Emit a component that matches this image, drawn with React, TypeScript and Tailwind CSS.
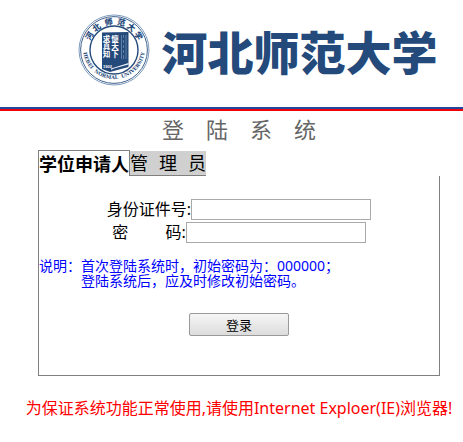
import React from "react";

function Seal() {
  return (
    <svg viewBox="0 0 72 72" className="w-18 h-18 shrink-0" fill="none" aria-hidden="true">
      <defs>
        <path id="sealTop" d="M10.5 36 A25.5 25.5 0 0 1 61.5 36" />
        <path id="sealBottom" d="M5 34 A31 31 0 1 0 67 34" />
      </defs>
      <circle cx="36" cy="36" r="35" stroke="#7f9bbd" strokeWidth="1" />
      <circle cx="36" cy="36" r="33.4" stroke="#2a5080" strokeWidth="0.9" />
      <circle cx="36" cy="36" r="24" fill="#fff" stroke="#24497b" strokeWidth="1.4" />
      <text
        fill="#24497b"
        fontSize="8"
        fontWeight="900"
        fontFamily="'Noto Sans CJK SC', sans-serif"
      >
        <textPath href="#sealTop" startOffset="50%" textAnchor="middle">
          {"河\u00a0北\u00a0\u00a0师\u00a0\u00a0范\u00a0大\u00a0学"}
        </textPath>
      </text>
      <text
        fill="#24497b"
        fontSize="5"
        fontWeight="700"
        fontFamily="'DejaVu Serif', serif"
      >
        <textPath href="#sealBottom" startOffset="50%" textAnchor="middle">
          {"HEBEI\u00a0\u00a0NORMAL\u00a0\u00a0UNIVERSITY"}
        </textPath>
      </text>
      {/* gate block */}
      <path d="M24 18.5 L50.5 18 L50.5 53 L32 58 L24 55 Z" fill="#24497b" />
      <path d="M33 54.5 L50.5 49 L50.5 50.5 L36 54.5 L33 56 Z" fill="#e6edf5" />
      <path
        d="M43.5 21v24M45.5 21v3M45.5 26v3M45.5 31v3M45.5 36v3M45.5 41v4M48 21v24"
        stroke="#6f8db3"
        strokeWidth="0.8"
      />
      <g
        className="[writing-mode:vertical-rl]"
        fill="#fff"
        fontSize="7.5"
        fontWeight="700"
        fontFamily="'Noto Sans CJK TC', sans-serif"
      >
        <text x="28.5" y="21">求真知</text>
        <text x="37" y="21">懷天下</text>
      </g>
      <text
        x="25"
        y="54"
        fill="#fff"
        fontSize="4"
        fontWeight="700"
        fontFamily="'Liberation Sans', sans-serif"
      >
        1902
      </text>
    </svg>
  );
}

const fields = [
  { id: "idcard", label: "身份证件号:", type: "text" },
  {
    id: "password",
    label: "密\u00a0\u00a0\u00a0\u00a0\u00a0\u00a0\u00a0\u00a0\u00a0码:",
    type: "password",
  },
];

const notes = [
  "说明：首次登陆系统时，初始密码为：000000；",
  "\u3000\u3000\u3000登陆系统后，应及时修改初始密码。",
];

export default function App() {
  return (
    <div className="bg-white text-black font-['Noto_Sans','Noto_Sans_CJK_SC',sans-serif]">
      <header className="flex items-center justify-center gap-3 h-[107px] pl-13 pb-2">
        <Seal />
        <h1 className="pt-1 text-[46px] leading-14 font-black text-[#24497b] whitespace-nowrap">
          河北师范大学
        </h1>
      </header>
      <div className="h-1 border-t-2 border-[#27479b] bg-[#f0000c]" />

      <main className="flex flex-col items-center pl-[15px]">
        <h2 className="mt-1 text-[22px] leading-7 text-[#666] whitespace-pre">
          登　陆　系　统
        </h2>

        <section className="w-full max-w-[402px] mt-[7px]">
          <div className="flex" role="tablist">
            <button
              role="tab"
              aria-selected="true"
              className="h-[26px] border border-b-0 border-[#808080] text-lg leading-6 font-bold"
            >
              学位申请人
            </button>
            <button
              role="tab"
              aria-selected="false"
              className="flex justify-between w-19 h-[25px] mt-px border-b border-[#808080] bg-[#d0d0d0] text-lg leading-6"
            >
              <span>管</span>
              <span>理</span>
              <span>员</span>
            </button>
          </div>

          <form
            className="border border-t-0 border-[#808080] pt-[22px] pb-[39px]"
            onSubmit={(e) => e.preventDefault()}
          >
            {fields.map((field) => (
              <div key={field.id} className="flex justify-center items-center h-[23px]">
                <label htmlFor={field.id} className="text-base leading-[23px]">
                  {field.label}
                </label>
                <input
                  id={field.id}
                  type={field.type}
                  className="w-[180px] h-[21px] px-1 border border-[#a9a9a9] bg-white text-sm"
                />
              </div>
            ))}

            <p className="mt-[14px] text-sm leading-[15px] text-[#0000ff] whitespace-pre">
              {notes.join("\n")}
            </p>

            <div className="flex justify-center mt-[25px]">
              <button
                type="submit"
                className="w-[100px] h-[23px] rounded-xs border border-[#999] bg-linear-to-b from-[#f6f6f6] to-[#dcdcdc] text-[13px] leading-5"
              >
                登录
              </button>
            </div>
          </form>
        </section>

        <p className="mt-5 text-base leading-6 text-[#ff0000] whitespace-nowrap">
          为保证系统功能正常使用,请使用Internet Exploer(IE)浏览器!
        </p>
      </main>
    </div>
  );
}
